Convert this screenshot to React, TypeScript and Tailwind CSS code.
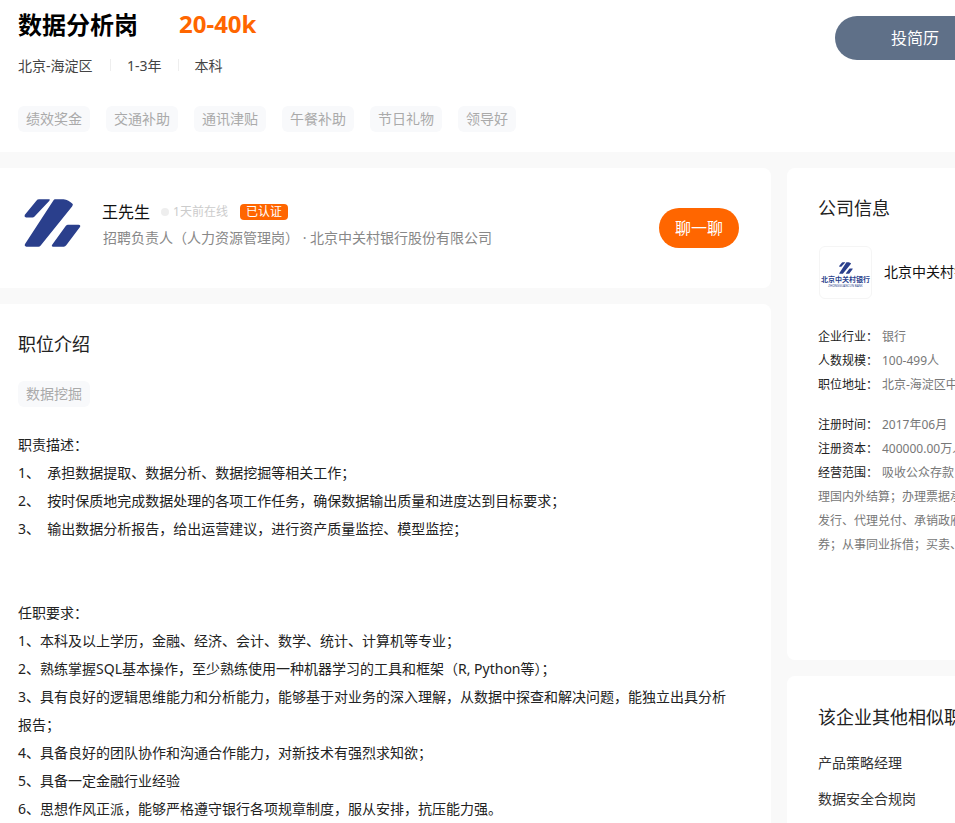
const Logo = ({ className }: { className: string }) => (
  <svg viewBox="70 144 166 142" className={className}>
    <path
      d="M72 192 L106 150 Q109 146 114 146 L143 146 Q147 146 144 150 L100 197 Q98 199 95 199 L76 199 Q70 198 72 192 Z"
      fill="#2a3f8c"
    />
    <path
      d="M160 146 L185 146 Q200 148 212 160 Q213 163 210 167 L118 281 Q116 284 112 284 L77 284 Q70 282 73 276 L156 149 Q158 146 160 146 Z"
      fill="#2a3f8c"
    />
    <path
      d="M198 220 L229 220 Q236 221 233 227 L193 280 Q190 284 186 284 L155 284 Q149 283 152 278 L192 223 Q195 220 198 220 Z"
      fill="#2a3f8c"
    />
  </svg>
);

const Tag = ({ text }: { text: string }) => (
  <span className="h-[26px] rounded-md bg-[#f8f9fb] px-2 text-[14px] leading-[26px] text-[#aaaaaa]">
    {text}
  </span>
);

const benefits = ["绩效奖金", "交通补助", "通讯津贴", "午餐补助", "节日礼物", "领导好"];

const duties = [
  "职责描述：",
  "1、\u00a0\u00a0承担数据提取、数据分析、数据挖掘等相关工作；",
  "2、\u00a0\u00a0按时保质地完成数据处理的各项工作任务，确保数据输出质量和进度达到目标要求；",
  "3、\u00a0\u00a0输出数据分析报告，给出运营建议，进行资产质量监控、模型监控；",
  "\u00a0",
  "\u00a0",
  "任职要求：",
  "1、本科及以上学历，金融、经济、会计、数学、统计、计算机等专业；",
  "2、熟练掌握SQL基本操作，至少熟练使用一种机器学习的工具和框架（R, Python等）；",
  "3、具有良好的逻辑思维能力和分析能力，能够基于对业务的深入理解，从数据中探查和解决问题，能独立出具分析报告；",
  "4、具备良好的团队协作和沟通合作能力，对新技术有强烈求知欲；",
  "5、具备一定金融行业经验",
  "6、思想作风正派，能够严格遵守银行各项规章制度，服从安排，抗压能力强。",
];

const companyRows = [
  ["企业行业：", "银行"],
  ["人数规模：", "100-499人"],
  ["职位地址：", "北京-海淀区中关村软件园"],
];

const regRows = [
  ["注册时间：", "2017年06月"],
  ["注册资本：", "400000.00万人民币"],
  ["经营范围：", "吸收公众存款；发放短期、中期和长期贷款；办"],
];

const scopeLines = [
  "理国内外结算；办理票据承兑与贴现；发行金融债券",
  "发行、代理兑付、承销政府债券；买卖政府债券",
  "券；从事同业拆借；买卖、代理买卖外汇",
];

const InfoRow = ({ label, value }: { label: string; value: string }) => (
  <div className="flex h-6 items-center whitespace-nowrap text-[12px]">
    <span className="w-16 shrink-0 text-[#222222]">{label}</span>
    <span className="text-[#777777]">{value}</span>
  </div>
);

export default function App() {
  return (
    <div
      className="h-[823px] w-[955px] overflow-hidden bg-[#f9f9f9]"
      style={{ fontFamily: '"Noto Sans", "Noto Sans CJK SC", sans-serif' }}
    >
      <div className="relative h-[152px] bg-white pl-[18px]">
        <div className="flex h-[50px] items-center">
          <h1 className="w-[161px] text-[24px] font-bold text-black">数据分析岗</h1>
          <span className="-mt-[2px] text-[24px] font-bold text-[#ff6600]">20-40k</span>
        </div>
        <div className="mt-[3px] flex h-6 items-center text-[14px] text-[#444444]">
          <span className="w-[76px]">北京-海淀区</span>
          <span className="mx-4 h-3 w-px bg-[#eeeeee]" />
          <span>1-3年</span>
          <span className="mx-4 h-3 w-px bg-[#eeeeee]" />
          <span>本科</span>
        </div>
        <div className="mt-[29px] flex gap-4">
          {benefits.map((b) => (
            <Tag key={b} text={b} />
          ))}
        </div>
        <button className="absolute left-[835px] top-4 flex h-11 w-[160px] items-center rounded-l-full bg-[#5f7088] pl-14 text-[16px] text-white">
          投简历
        </button>
      </div>

      <div className="mt-4 flex gap-4">
        <div className="flex w-[771px] shrink-0 flex-col gap-4">
          <div className="flex h-[120px] items-center rounded-r-lg bg-white pl-6 pr-8">
            <Logo className="mb-[10px] h-[50px] w-[57px] shrink-0" />
            <div className="mb-[6px] ml-[22px] flex-1">
              <div className="flex h-6 items-center">
                <span className="-ml-px text-[16px] text-[#111111]">王先生</span>
                <span className="ml-[11px] h-2 w-2 rounded-full bg-[#eeeeee]" />
                <span className="ml-1 text-[12px] text-[#cccccc]">1天前在线</span>
                <span className="ml-3 h-4 rounded-sm bg-[#ff6600] px-1.5 text-[12px] leading-4 text-white">
                  已认证
                </span>
              </div>
              <div className="mt-[2px] text-[14px] leading-6 text-[#888888]">
                招聘负责人（人力资源管理岗）&nbsp;· 北京中关村银行股份有限公司
              </div>
            </div>
            <button className="h-10 w-20 rounded-full bg-[#ff6600] text-[16px] text-white">
              聊一聊
            </button>
          </div>

          <div className="h-[600px] rounded-r-lg bg-white pl-[18px] pr-8 pt-[26px]">
            <h2 className="text-[18px] leading-[28px] text-[#222222]">职位介绍</h2>
            <div className="mt-[23px] flex">
              <Tag text="数据挖掘" />
            </div>
            <div className="mt-[24px] text-[14px] leading-[28px] text-[#222222]">
              {duties.map((line, i) => (
                <p key={i}>{line}</p>
              ))}
            </div>
          </div>
        </div>

        <div className="flex w-[300px] shrink-0 flex-col gap-4">
          <div className="h-[492px] overflow-hidden rounded-l-lg bg-white pl-[31px] pt-[26px]">
            <h2 className="text-[18px] leading-[28px] text-[#222222]">公司信息</h2>
            <div className="mt-[24px] flex items-center">
              <div className="ml-px flex h-[53px] w-[53px] shrink-0 flex-col items-center justify-center rounded-md border border-[#f5f5f5]">
                <Logo className="mt-1 h-[12px] w-[14px]" />
                <span className="mt-[1px] whitespace-nowrap text-[7px] font-bold leading-[9px] text-[#2a3f8c]">
                  北京中关村银行
                </span>
                <span className="whitespace-nowrap text-[3px] leading-[4px] text-[#2a3f8c]">
                  ZHONGGUANCUN BANK
                </span>
              </div>
              <span className="mb-[2px] ml-3 whitespace-nowrap text-[14px] text-[#111111]">
                北京中关村银行股份有限公司
              </span>
            </div>
            <div className="mt-[26px]">
              {companyRows.map(([l, v]) => (
                <InfoRow key={l} label={l} value={v} />
              ))}
            </div>
            <div className="mt-4">
              {regRows.map(([l, v]) => (
                <InfoRow key={l} label={l} value={v} />
              ))}
              {scopeLines.map((t) => (
                <div key={t} className="h-6 whitespace-nowrap text-[12px] leading-6 text-[#777777]">
                  {t}
                </div>
              ))}
            </div>
          </div>

          <div className="h-[200px] overflow-hidden rounded-l-lg bg-white pl-[31px] pt-[27px]">
            <h2 className="whitespace-nowrap text-[18px] leading-[28px] text-[#222222]">
              该企业其他相似职位
            </h2>
            <div className="mt-[20px] flex flex-col gap-[12px] text-[14px] leading-6 text-[#333333]">
              <div>产品策略经理</div>
              <div>数据安全合规岗</div>
            </div>
          </div>
        </div>
      </div>
    </div>
  );
}
